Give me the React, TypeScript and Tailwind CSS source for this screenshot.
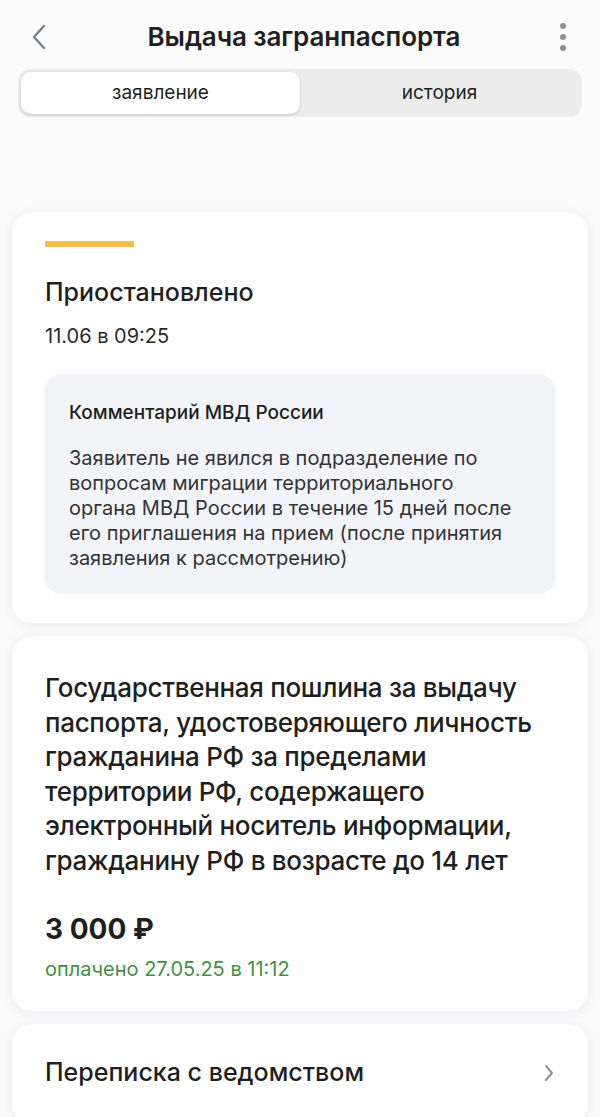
const font = { fontFamily: "Inter, 'Noto Sans', sans-serif" };

const ChevronLeft = () => (
    <svg width="18" height="28" viewBox="0 0 18 28" fill="none">
        <path d="M14 3 L4 14 L14 25" stroke="#7c8089" strokeWidth="2.4" strokeLinecap="round" strokeLinejoin="round" />
    </svg>
);

const Kebab = () => (
    <div className="flex flex-col items-center gap-[5px]">
        <span className="w-[6px] h-[6px] rounded-full bg-[#8b8f97]" />
        <span className="w-[6px] h-[6px] rounded-full bg-[#8b8f97]" />
        <span className="w-[6px] h-[6px] rounded-full bg-[#8b8f97]" />
    </div>
);

const ChevronRight = () => (
    <svg width="12" height="20" viewBox="0 0 12 20" fill="none">
        <path d="M3 3 L9 10 L3 17" stroke="#8b8f97" strokeWidth="2" strokeLinecap="round" strokeLinejoin="round" />
    </svg>
);

export default function App() {
    return (
        <div className="w-[600px] h-[1117px] overflow-hidden bg-[#fbfbfc] text-[#1f1f21]" style={font}>
            <div className="h-[69px] flex items-center justify-between pl-[30px] pr-[34px] pt-[4px]">
                <ChevronLeft />
                <h1 className="text-[26px] font-semibold tracking-[-0.1px]">Выдача загранпаспорта</h1>
                <Kebab />
            </div>
            <div className="mx-[18px] h-[48px] rounded-[12px] bg-[#ececed] p-[3px] flex">
                <div className="flex-1 rounded-[10px] bg-white shadow-[0_1px_3px_rgba(0,0,0,0.18)] flex items-center justify-center text-[19px]">
                    заявление
                </div>
                <div className="flex-1 flex items-center justify-center text-[19px]">история</div>
            </div>

            <div className="mt-[95px] px-[12px] flex flex-col gap-[13px]">
                <div className="bg-white rounded-[20px] shadow-[0_2px_12px_rgba(30,40,60,0.08)] px-[33px] pt-[29px] pb-[29px]">
                    <div className="w-[89px] h-[6px] bg-[#f3bc4b]" />
                    <div className="mt-[30px] text-[25px] font-medium leading-[30px]">Приостановлено</div>
                    <div className="mt-[17px] text-[20px] leading-[24px] text-[#2a2a2c]">11.06 в 09:25</div>
                    <div className="mt-[26px] rounded-[16px] bg-[#f2f4f8] px-[24px] pt-[27px] pb-[23px]">
                        <div className="text-[19px] font-medium leading-[24px]">Комментарий МВД России</div>
                        <div className="mt-[21px] text-[20px] leading-[25px] text-[#333336] whitespace-pre-line">
                            {"Заявитель не явился в подразделение по\nвопросам миграции территориального\nоргана МВД России в течение 15 дней после\nего приглашения на прием (после принятия\nзаявления к рассмотрению)"}
                        </div>
                    </div>
                </div>

                <div className="bg-white rounded-[20px] shadow-[0_2px_12px_rgba(30,40,60,0.08)] px-[33px] pt-[35px] pb-[30px]">
                    <div className="text-[26px] font-medium leading-[34.6px] tracking-[-0.3px] whitespace-pre-line">
                        {"Государственная пошлина за выдачу\nпаспорта, удостоверяющего личность\nгражданина РФ за пределами\nтерритории РФ, содержащего\nэлектронный носитель информации,\nгражданину РФ в возрасте до 14 лет"}
                    </div>
                    <div className="mt-[33px] text-[28px] font-bold leading-[34px]">3 000 ₽</div>
                    <div className="mt-[11px] text-[20px] leading-[24px] text-[#3f9141]">оплачено 27.05.25 в 11:12</div>
                </div>

                <div className="bg-white rounded-[20px] shadow-[0_2px_12px_rgba(30,40,60,0.08)] px-[33px] h-[100px] flex items-center justify-between pb-[2px]">
                    <div className="text-[25px] font-medium">Переписка с ведомством</div>
                    <ChevronRight />
                </div>
            </div>
        </div>
    );
}
